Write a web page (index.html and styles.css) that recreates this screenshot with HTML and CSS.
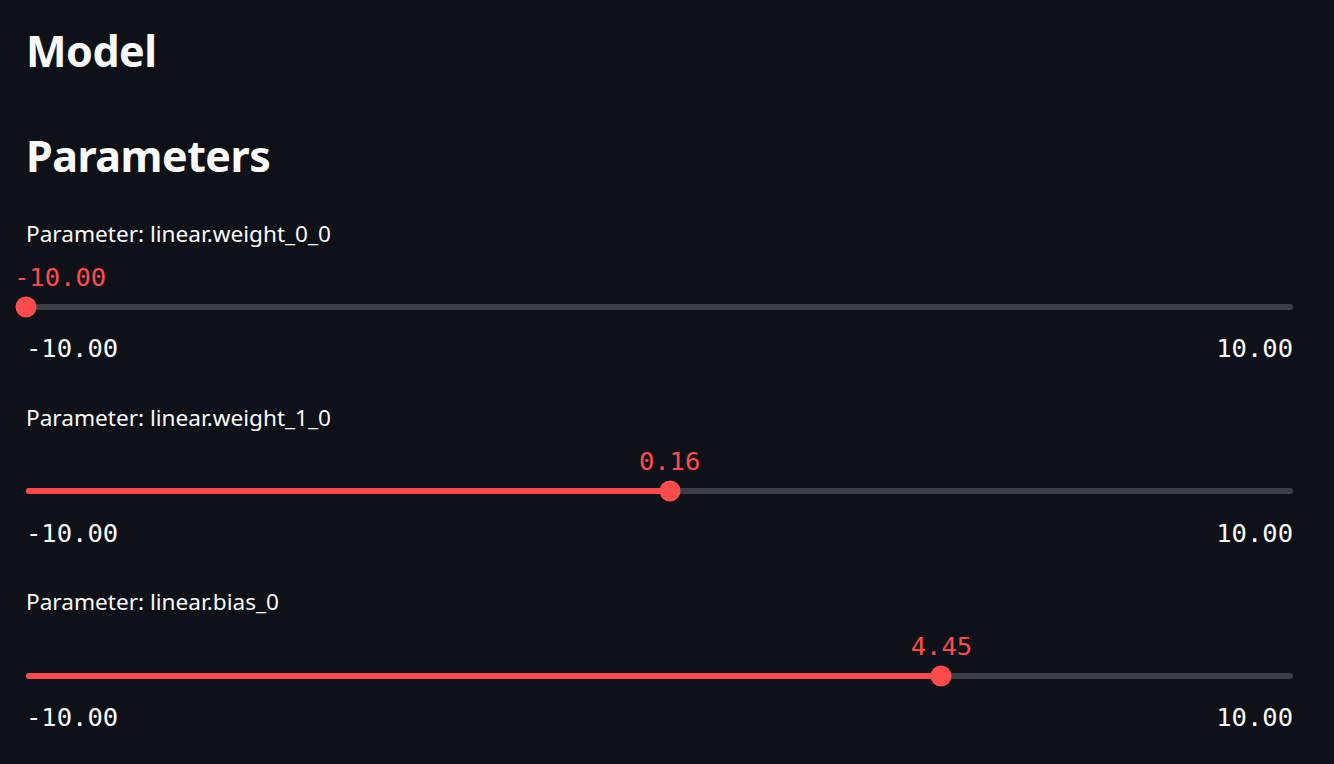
FILE: index.html
```html
<!DOCTYPE html>
<html lang="en">
<head>
<meta charset="utf-8">
<title>Model</title>
<link rel="stylesheet" href="styles.css">
</head>
<body>
<main class="main">
  <h2 class="heading heading-model">Model</h2>
  <h2 class="heading heading-params">Parameters</h2>

  <section class="param param-first">
    <div class="label">Parameter: linear.weight_0_0</div>
    <div class="slider">
      <div class="track">
        <div class="fill" style="width:0%"></div>
        <div class="thumb" style="left:0%"></div>
        <div class="value value-start" style="left:0%">-10.00</div>
      </div>
    </div>
    <div class="ticks"><span>-10.00</span><span>10.00</span></div>
  </section>

  <section class="param">
    <div class="label">Parameter: linear.weight_1_0</div>
    <div class="slider">
      <div class="track">
        <div class="fill" style="width:50.8%"></div>
        <div class="thumb" style="left:50.8%"></div>
        <div class="value" style="left:50.8%">0.16</div>
      </div>
    </div>
    <div class="ticks"><span>-10.00</span><span>10.00</span></div>
  </section>

  <section class="param">
    <div class="label">Parameter: linear.bias_0</div>
    <div class="slider">
      <div class="track">
        <div class="fill" style="width:72.25%"></div>
        <div class="thumb" style="left:72.25%"></div>
        <div class="value" style="left:72.25%">4.45</div>
      </div>
    </div>
    <div class="ticks"><span>-10.00</span><span>10.00</span></div>
  </section>
</main>
</body>
</html>
```

FILE: styles.css
```css
html, body {
  margin: 0;
  padding: 0;
  background: #0e1117;
}

body {
  color: #fafafa;
  font-family: "Noto Sans", "Open Sans", sans-serif;
  width: 1334px;
  height: 764px;
  overflow: hidden;
}

.main {
  padding: 21px 41px 0 26px;
}

.heading {
  margin: 0;
  font-size: 43px;
  font-weight: 700;
  line-height: 60px;
  letter-spacing: -0.5px;
}

.heading-params {
  margin-top: 45px;
}

.param-first {
  margin-top: 33px;
}

.param + .param {
  margin-top: 39.5px;
}

.label {
  font-size: 22.6px;
  line-height: 30px;
  height: 30px;
  white-space: nowrap;
}

.slider {
  padding-top: 55.8px;
  padding-bottom: 23.2px;
}

.param-first .slider {
  padding-top: 55px;
}

.track {
  position: relative;
  height: 6px;
  border-radius: 3px;
  background: #3c3f46;
}

.fill {
  height: 100%;
  border-radius: 3px;
  background: #ff4b4b;
}

.thumb {
  position: absolute;
  top: 50%;
  width: 21px;
  height: 21px;
  border-radius: 50%;
  background: #ff4b4b;
  transform: translate(-50%, -50%);
}

.value {
  position: absolute;
  top: -39.1px;
  transform: translateX(-50%);
  font-family: "DejaVu Sans Mono", "Liberation Mono", monospace;
  font-size: 25.5px;
  line-height: 25.5px;
  color: #ff4b4b;
  white-space: nowrap;
}

.value-start {
  transform: translateX(-12px);
}

.ticks {
  display: flex;
  justify-content: space-between;
  font-family: "DejaVu Sans Mono", "Liberation Mono", monospace;
  font-size: 25.5px;
  line-height: 30px;
  height: 30px;
}
```
